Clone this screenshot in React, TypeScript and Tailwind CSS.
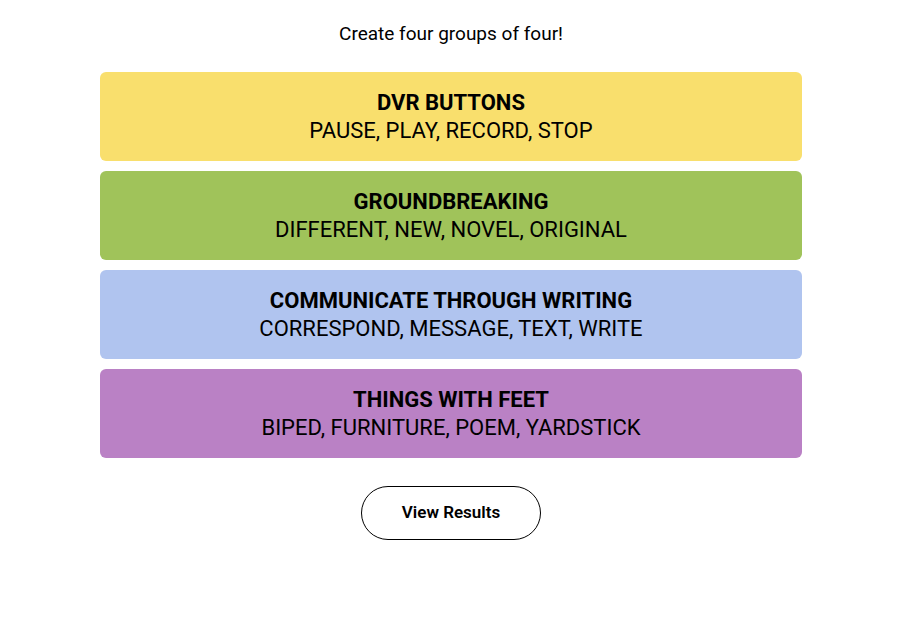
import React from 'react';

const groups = [
    { title: 'DVR BUTTONS', words: 'PAUSE, PLAY, RECORD, STOP', bg: 'bg-[#f9df6d]' },
    { title: 'GROUNDBREAKING', words: 'DIFFERENT, NEW, NOVEL, ORIGINAL', bg: 'bg-[#a0c35a]' },
    { title: 'COMMUNICATE THROUGH WRITING', words: 'CORRESPOND, MESSAGE, TEXT, WRITE', bg: 'bg-[#b0c4ef]' },
    { title: 'THINGS WITH FEET', words: 'BIPED, FURNITURE, POEM, YARDSTICK', bg: 'bg-[#ba81c5]' },
];

export default function App() {
    return (
        <div className="min-h-screen bg-white text-black font-['Roboto',sans-serif]">
            <div className="w-[702px] ml-[100px] flex flex-col items-center">
                {/* Prompt */}
                <p className="mt-[23px] text-[19px] leading-[22px]">Create four groups of four!</p>

                {/* Solved groups */}
                <div className="mt-[27px] w-full flex flex-col gap-[10px]">
                    {groups.map(g => (
                        <div key={g.title}
                            className={`h-[89px] rounded-[6px] flex flex-col items-center justify-center ${g.bg}`}>
                            <div className="text-[22px] leading-[28px] font-bold">{g.title}</div>
                            <div className="text-[22px] leading-[28px]">{g.words}</div>
                        </div>
                    ))}
                </div>

                <button className="mt-[28px] w-[180px] h-[54px] rounded-full border border-black text-[17px] font-semibold">
                    View Results
                </button>
            </div>
        </div>
    );
}
